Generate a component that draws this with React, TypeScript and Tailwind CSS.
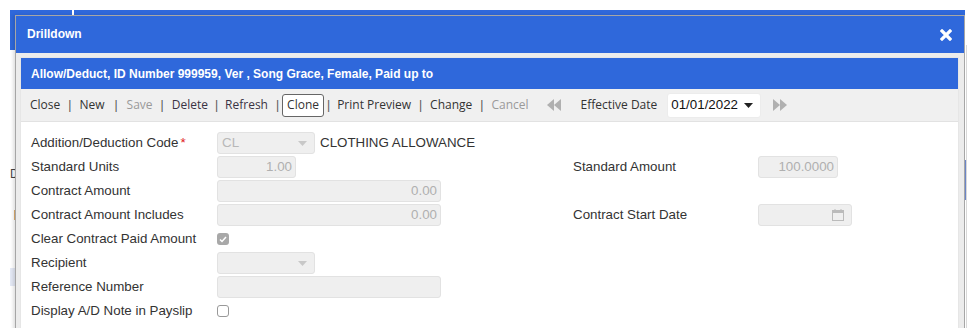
import React from "react";

const BLUE = "bg-[#2f68db]";

function Sep({ cls = "mx-[8px]" }: { cls?: string }) {
  return <span className={`${cls} text-[#555] font-[Liberation_Sans]`}>|</span>;
}

function Caret({ color = "#c8c8c8" }: { color?: string }) {
  return (
    <svg width="9" height="5" viewBox="0 0 9 5">
      <polygon points="0,0 9,0 4.5,5" fill={color} />
    </svg>
  );
}

function Row({ children }: { children: React.ReactNode }) {
  return <div className="flex h-[24px] items-center">{children}</div>;
}

function Label({ children, w = "w-[186px]" }: { children: React.ReactNode; w?: string }) {
  return <div className={`${w} shrink-0 text-[#333] whitespace-nowrap`}>{children}</div>;
}

function Input({ w, value }: { w: string; value?: string }) {
  return (
    <div
      className={`${w} h-[22px] rounded-[3px] border border-[#e2e2e2] bg-[#efefef] flex items-center justify-end pr-[3px] text-[#b0b0b0]`}
    >
      {value}
    </div>
  );
}

export default function App() {
  return (
    <div className="relative w-[976px] h-[328px] bg-white overflow-hidden font-['Liberation_Sans',Arial,sans-serif] text-[13.33px]">
      {/* page behind */}
      <div className={`absolute left-[10px] top-[10px] w-[955px] h-[40px] ${BLUE}`} />
      <div className="absolute left-[72px] top-[10px] w-[2px] h-[6px] bg-white" />
      <div className="absolute left-[10px] top-[268px] w-[5px] h-[18px] bg-[#e4e9f5]" />
      <div className="absolute left-[10px] top-[168px] text-[12px] text-[#444] leading-none">D</div>
      <div className="absolute left-[14px] top-[210px] w-[1px] h-[10px] bg-[#e0b070]" />
      <div className="absolute left-[965px] top-[160px] w-[1px] h-[40px] bg-[#6b86c9]" />
      <div className="absolute left-[966px] top-[45px] w-[1px] h-[283px] bg-[#d8d8d8]" />

      {/* dialog */}
      <div className="absolute left-[15px] top-[15px] w-[950px] h-[330px] border border-[#a6a6a6] bg-[#ececec] shadow-[-2px_0_3px_rgba(0,0,0,0.12)] flex flex-col">
        <div className={`h-[37px] ${BLUE} flex items-center justify-between pl-[11px] pr-[12px] shrink-0`}>
          <span className="text-white font-bold text-[12px] mt-[-1px]">Drilldown</span>
          <svg width="12" height="12" viewBox="0 0 12 12">
            <path d="M2 2 L10 10 M10 2 L2 10" stroke="white" strokeWidth="3.2" strokeLinecap="square" />
          </svg>
        </div>
        <div className="flex-1 pl-[4px] pr-[5px] pt-[4px]">
          <div className="h-full border border-[#e6e6e6] bg-white flex flex-col">
            <div className={`h-[31px] ${BLUE} flex items-center pl-[10px] text-white font-bold text-[12px] shrink-0`}>
              Allow/Deduct, ID Number 999959, Ver , Song Grace, Female, Paid up to
            </div>
            <div className="h-[33px] bg-[#f0f0f0] border-b border-[#e2e2e2] flex items-center pl-[9px] font-['Open_Sans',sans-serif] text-[12px] text-[#333] shrink-0">
              <span>Close</span>
              <Sep />
              <span>New</span>
              <Sep cls="ml-[10px] mr-[9px]" />
              <span className="text-[#9a9a9a]">Save</span>
              <Sep />
              <span className="text-[#3a3344]">Delete</span>
              <Sep cls="ml-[7px] mr-[7px]" />
              <span className="text-[#3a3344]">Refresh</span>
              <Sep cls="ml-[8px] mr-[3px]" />
              <span className="h-[23px] px-[4px] rounded-[3px] border border-[#666] bg-white flex items-center">Clone</span>
              <Sep cls="ml-[3px] mr-[7px]" />
              <span>Print Preview</span>
              <Sep />
              <span>Change</span>
              <Sep />
              <span className="text-[#9a9a9a]">Cancel</span>
              <svg className="ml-[17px]" width="16" height="12" viewBox="0 0 16 12">
                <polygon points="8,0 8,12 1,6" fill="#b0b0b0" />
                <polygon points="15,0 15,12 8,6" fill="#b0b0b0" />
              </svg>
              <span className="ml-[19px]">Effective Date</span>
              <div className="ml-[10px] w-[94px] h-[25px] bg-white rounded-[3px] border border-[#ececec] flex items-center justify-between pl-[3px] pr-[7px] text-[13.33px] text-[#111] font-['Liberation_Sans',sans-serif]">
                <span>01/01/2022</span>
                <Caret color="#222" />
              </div>
              <svg className="ml-[11px]" width="16" height="12" viewBox="0 0 16 12">
                <polygon points="1,0 1,12 8,6" fill="#b0b0b0" />
                <polygon points="8,0 8,12 15,6" fill="#b0b0b0" />
              </svg>
            </div>
            <div className="pl-[10px] pt-[9px] flex flex-col">
              <Row>
                <Label>
                  Addition/Deduction Code<span className="text-[#e02020] ml-[2px]">*</span>
                </Label>
                <div className="w-[98px] h-[22px] rounded-[3px] border border-[#e2e2e2] bg-[#efefef] flex items-center justify-between pl-[4px] pr-[7px] text-[#b8b8b8]">
                  <span>CL</span>
                  <Caret />
                </div>
                <span className="ml-[5px] text-[#333]">CLOTHING ALLOWANCE</span>
              </Row>
              <Row>
                <div className="w-[542px] flex items-center">
                  <Label>Standard Units</Label>
                  <Input w="w-[79px]" value="1.00" />
                </div>
                <Label w="w-[185px]">Standard Amount</Label>
                <Input w="w-[80px]" value="100.0000" />
              </Row>
              <Row>
                <Label>Contract Amount</Label>
                <Input w="w-[224px]" value="0.00" />
              </Row>
              <Row>
                <div className="w-[542px] flex items-center">
                  <Label>Contract Amount Includes</Label>
                  <Input w="w-[224px]" value="0.00" />
                </div>
                <Label w="w-[185px]">Contract Start Date</Label>
                <div className="w-[94px] h-[22px] rounded-[3px] border border-[#e2e2e2] bg-[#efefef] flex items-center justify-end pr-[7px]">
                  <svg width="12" height="12" viewBox="0 0 12 12">
                    <rect x="0.5" y="1.5" width="11" height="10" fill="none" stroke="#bbb" />
                    <rect x="0.5" y="1.5" width="11" height="2.5" fill="#bbb" />
                    <rect x="2.5" y="0" width="1" height="2" fill="#bbb" />
                    <rect x="8.5" y="0" width="1" height="2" fill="#bbb" />
                  </svg>
                </div>
              </Row>
              <Row>
                <Label>Clear Contract Paid Amount</Label>
                <div className="w-[12px] h-[12px] rounded-[3px] bg-[#a8a8a8] flex items-center justify-center">
                  <svg width="8" height="7" viewBox="0 0 8 7">
                    <path d="M1 3.5 L3 5.5 L7 1" stroke="white" strokeWidth="1.5" fill="none" />
                  </svg>
                </div>
              </Row>
              <Row>
                <Label>Recipient</Label>
                <div className="w-[98px] h-[22px] rounded-[3px] border border-[#e2e2e2] bg-[#efefef] flex items-center justify-end pr-[7px]">
                  <Caret />
                </div>
              </Row>
              <Row>
                <Label>Reference Number</Label>
                <Input w="w-[224px]" />
              </Row>
              <Row>
                <Label>Display A/D Note in Payslip</Label>
                <div className="w-[12px] h-[12px] rounded-[3px] border border-[#999] bg-white" />
              </Row>
            </div>
          </div>
        </div>
      </div>
    </div>
  );
}
